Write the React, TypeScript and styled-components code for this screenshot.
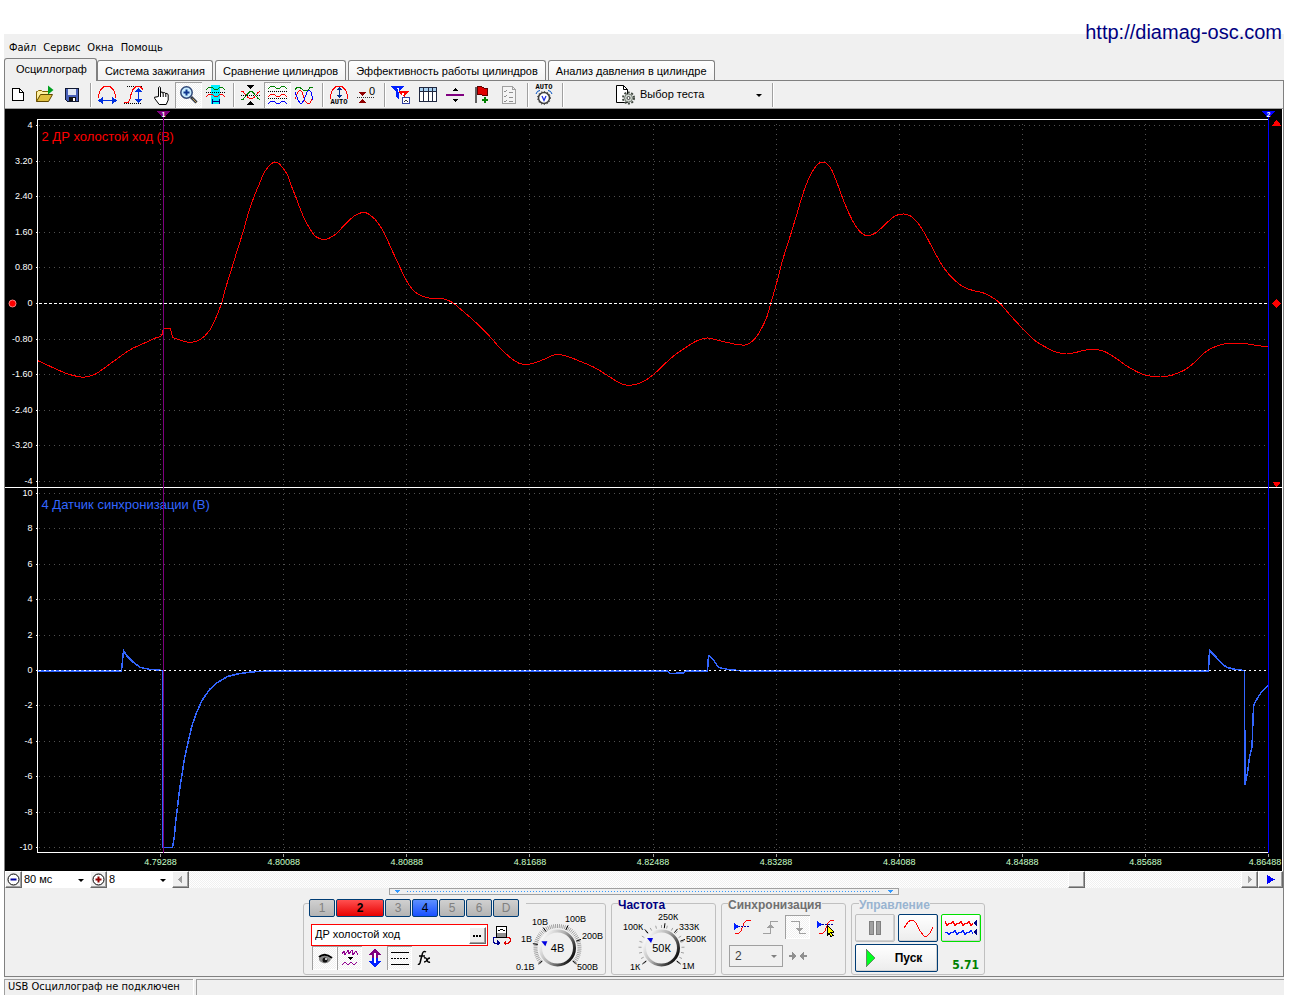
import React, { useLayoutEffect, useRef, useState } from 'react';
import styled, { createGlobalStyle, css } from 'styled-components';

const UI = `"Liberation Sans", Arial, sans-serif`;
const MENU = `"DejaVu Sans Condensed", Tahoma, "DejaVu Sans", sans-serif`;
const FACE = '#f0f0f0';
const dither = `repeating-conic-gradient(#fff 0 25%, ${FACE} 0 50%) 0 0 / 2px 2px`;

const Global = createGlobalStyle`
  *, *::before, *::after { box-sizing: border-box; }
  body { margin: 0; background: #fff; font: 11px/14px ${UI}; color: #000; }
  button, input, select { font: inherit; color: inherit; margin: 0; }
`;

/* ---------- shell ---------- */

const Page = styled.div`
  position: relative;
  display: flex;
  flex-direction: column;
  min-height: 100vh;
  padding: 34px 12px 5px 4px;
`;
const SiteLink = styled.a`
  position: absolute;
  top: 20px;
  right: 14px;
  font-size: 20px;
  line-height: 24px;
  color: #000080;
  text-decoration: none;
`;
const Window = styled.main`
  flex: 1;
  display: flex;
  flex-direction: column;
  background: ${FACE};
`;
const MenuBar = styled.nav`
  display: flex;
  height: 24px;
  padding: 4px 2px 0;
  font-family: ${MENU};
`;
const MenuItem = styled.button`
  border: 0;
  background: none;
  padding: 0 4px 0 3px;
`;
const Tabs = styled.div`
  display: flex;
  align-items: flex-end;
  height: 22px;
`;
const Tab = styled.button<{ $active?: boolean }>`
  height: 20px;
  margin-right: 2px;
  padding: 0 7px;
  border: 1px solid #808080;
  border-bottom: 0;
  border-radius: 3px 3px 0 0;
  background: linear-gradient(#fff, #f2f2f2);
  ${p => p.$active && css`
    position: relative;
    height: 23px;
    margin: 0 0 -1px;
    padding: 0 9px 2px 11px;
    background: ${FACE};
  `}
`;
const TabPage = styled.section`
  flex: 1;
  display: flex;
  flex-direction: column;
  border: 1px solid #808080;
`;
const StatusBar = styled.footer`
  display: flex;
  gap: 3px;
  height: 18px;
  padding-top: 2px;
  font-family: ${MENU};
`;
const StatusCell = styled.div<{ $grow?: boolean }>`
  ${p => (p.$grow ? 'flex: 1;' : 'width: 189px;')}
  padding-left: 3px;
  border: solid #a0a0a0;
  border-width: 1px 0 0 1px;
  box-shadow: 1px 0 #fff;
`;

/* ---------- toolbar ---------- */

const Toolbar = styled.div`
  display: flex;
  align-items: center;
  height: 28px;
  border-bottom: 1px solid #a0a0a0;
  box-shadow: 0 1px #fff;
`;
const ToolButton = styled.button<{ $on?: boolean }>`
  display: flex;
  align-items: center;
  justify-content: center;
  width: 27px;
  height: 26px;
  padding: 0 2px 0 0;
  border: 0;
  background: none;
  ${p => p.$on && css`
    background: ${dither};
    box-shadow: inset 1px 1px #a0a0a0, inset -1px -1px #fff;
  `}
`;
const Divider = styled.span`
  width: 2px;
  height: 24px;
  margin: 0 2px 0 4px;
  border-left: 1px solid #a0a0a0;
  border-right: 1px solid #fff;
`;
const TestPicker = styled.label`
  display: flex;
  align-items: center;
  gap: 2px;
  margin-left: 46px;
`;
const Arrowed = styled.div`
  position: relative;
  display: flex;
  &::after {
    content: '';
    position: absolute;
    right: 6px;
    top: calc(50% - 1px);
    border: 3px solid transparent;
    border-top-color: currentColor;
    border-bottom: 0;
    pointer-events: none;
  }
`;
const PlainSelect = styled.select<{ $w: number; $white?: boolean }>`
  appearance: none;
  width: ${p => p.$w}px;
  height: 17px;
  padding: 0 0 1px 2px;
  border: 0;
  border-radius: 0;
  background: ${p => (p.$white ? '#fff' : 'transparent')};
`;

type SvgProps = { children: React.ReactNode; w?: number; h?: number; smooth?: boolean };
const Glyph = ({ children, w = 24, h = 24, smooth }: SvgProps) => (
  <svg width={w} height={h} viewBox={`0 0 ${w} ${h}`} fill="none" shapeRendering={smooth ? 'auto' : 'crispEdges'} aria-hidden="true">
    {children}
  </svg>
);

const hump = (y: number) => `M3 ${y}l3-2h3l3 2h2l3-2h2l3 2`;

const icons: Record<string, React.ReactNode> = {
  new: <Glyph><path d="M6.500 5.500h7l4 4v8h-11z" fill="#fff" stroke="#000" /><path d="M13.500 5.500v4h4" stroke="#000" /></Glyph>,
  open: (
    <Glyph smooth>
      <path d="M3.500 18.500V8.500h1l1-1h3l1 1h6v3" fill="#fff0a0" stroke="#806000" />
      <path d="M3.500 18.500l4-7h12l-4 7z" fill="#e0c040" stroke="#604800" />
      <path d="M15 2.500l5.500 4.500L15 11.500z" fill="#00a020" />
    </Glyph>
  ),
  save: (
    <Glyph>
      <path d="M5.500 5.500h13v13H7.500l-2-2z" fill="#4860b8" stroke="#101830" />
      <path d="M8 6h8v6H8z" fill="#dfe6f4" />
      <path d="M9 14h7v4H9z" fill="#111" /><path d="M13 15h2v3h-2z" fill="#fff" />
    </Glyph>
  ),
  period: (
    <Glyph>
      <path d="M3.500 15v-3l2-5 3-3 3-1h1l3 1 3 3 2 5v3" stroke="red" />
      <path d="M6 17.500h13" stroke="#0030e0" />
      <path d="M8 14v7l-5-3.500zM17 14v7l5-3.500z" fill="#0030e0" />
    </Glyph>
  ),
  amplitude: (
    <Glyph>
      <path d="M5 3.500h16M2 20.500h17" stroke="#000" strokeDasharray="1 1" />
      <path d="M2 19.500h4l2-3 1-5 2-5 3-3h4l3 3" stroke="red" />
      <path d="M16.500 8v9" stroke="#0030e0" />
      <path d="M13 9l3.500-4L20 9zM13 16l3.500 4 3.500-4z" fill="#0030e0" />
    </Glyph>
  ),
  hand: (
    <Glyph smooth>
      <path d="M9.500 13.500V4.500q1-1.500 2 0v6q0-2 1.500-1.500t1 1.500q.2-1.500 1.500-1t1 1.500q.3-1 1.500-.5t1.200 1.500v5l-2 4.500h-7l-4.500-6q-.8-2 1.300-1.500z" fill="#fff" stroke="#000" />
      <path d="M11.500 10v4M14.200 10.500v3.500M16.800 11v3" stroke="#000" />
    </Glyph>
  ),
  zoom: (
    <Glyph smooth>
      <circle cx="10.500" cy="9.500" r="5.700" fill="#c8ecff" stroke="#304878" strokeWidth="1.500" />
      <path d="M7.500 9.500h6M10.500 6.500v6" stroke="#103890" strokeWidth="2" />
      <path d="M15 14l5.500 5.500" stroke="#303848" strokeWidth="3" /><path d="M16.500 15.500l4 4" stroke="#c8a050" />
    </Glyph>
  ),
  band: (
    <Glyph>
      <path d="M8 2h9v19H8z" fill="#00f0ff" />
      <path d={hump(6.500)} stroke="#008000" /><path d="M3 9.500h19" stroke="#000" strokeDasharray="1 1" />
      <path d={hump(13.500)} stroke="red" />
      <path d="M9 18.500h8" stroke="#000080" /><path d="M9 16v5M16.500 16v5" stroke="#000080" />
    </Glyph>
  ),
  cross: (
    <Glyph>
      <path d="M9 2h7l-3.500 4zM9 22h7l-3.500-4z" fill="#000" />
      <path d="M3 12.500h19" stroke="#000" strokeDasharray="1 1" />
      <path d="M3 8.500h2l5 6 2 1h2l2-1 4-5 2-1" stroke="red" /><path d="M3 16.500h2l5-6 2-2h2l2 2 4 5 2 1" stroke="#008000" />
    </Glyph>
  ),
  stack: (
    <Glyph>
      <path d={hump(5.500)} stroke="#008000" /><path d="M3 8.500h19M3 15.500h19" stroke="#000" strokeDasharray="1 1" />
      <path d={hump(13.500)} stroke="red" /><path d={hump(20.500)} stroke="#0000ff" />
    </Glyph>
  ),
  overlay: (
    <Glyph>
      <path d="M3 6.500l2-2h3l4 3h4l2-3h3" stroke="#008000" />
      <path d="M3 16l3-7 2-2 2 2 3 9 2 2h3l3-5" stroke="red" />
      <path d="M3 9l3 8 2 3h2l2-3 3-8 2-2 2 2 2 8" stroke="#0000ff" />
    </Glyph>
  ),
  auto: (
    <Glyph>
      <path d="M3.500 16v-4l2-5 3-3 3-1h1l3 1 3 3 2 5v4" stroke="red" />
      <path d="M12.500 5v9" stroke="#003090" /><path d="M10 7l2.500-3L15 7zM10 12l2.500 3 2.500-3z" fill="#003090" />
      <text x="12" y="21" fontSize="7" fontWeight="700" fontFamily="Liberation Mono, monospace" textAnchor="middle" fill="#000">AUTO</text>
    </Glyph>
  ),
  zero: (
    <Glyph>
      <path d="M3 14.500h18" stroke="#333" strokeDasharray="1 1" />
      <path d="M4 9h8l-4 4zM4 20h8l-4-4z" fill="#900000" />
      <text x="18" y="12" fontSize="11" fontFamily="Liberation Sans" textAnchor="middle" fill="#000">0</text>
    </Glyph>
  ),
  filters: (
    <Glyph>
      <path d="M2 3h13l-5 6v8l-3-3V9z" fill="#0020ff" /><path d="M9 8h11l-4 5v5l-3-3v-2z" fill="red" />
      <path d="M8 5h1v4" stroke="#fff" /><path d="M13 10h2l-2 3h2" stroke="#fff" />
      <path d="M13.500 14.500h7v6h-7z" fill="#fff" stroke="#3040a0" /><path d="M15 18h1l1-1 1 1h1" stroke="#333" />
    </Glyph>
  ),
  table: (
    <Glyph>
      <path d="M3.500 4.500h17v14h-17z" fill="#fff" stroke="#202840" /><path d="M4 5h16v3H4z" fill="#a8d0f0" />
      <path d="M3.500 8.500h17M7.500 5v13M12 5v13M16.500 5v13" stroke="#202840" />
    </Glyph>
  ),
  split: <Glyph><path d="M3 11h18v2H3z" fill="#800080" /><path d="M9 8l3-3 3 3zM9 16l3 3 3-3z" fill="#000" /></Glyph>,
  flag: (
    <Glyph>
      <path d="M6 4v16" stroke="#606060" strokeWidth="2" /><path d="M7 4l3-1 4 2h4l-1 4 1 3-4 1-4-2H7z" fill="#e00000" stroke="#600000" />
      <path d="M12 17h6M15 14v6" stroke="#008000" strokeWidth="2" />
    </Glyph>
  ),
  checklist: (
    <Glyph>
      <path d="M5.500 3.500h10l3 3v14h-13z" fill="#f4f4f4" stroke="#a0a0a0" /><path d="M15.500 3.500v3h3" stroke="#a0a0a0" />
      <path d="M7 8l1 1 2-2M7 13l1 1 2-2M7 18l1 1 2-2M12 9h4M12 14h4M12 18h4" stroke="#909090" />
    </Glyph>
  ),
  autoVolt: (
    <Glyph smooth>
      <text x="12" y="6" fontSize="7" fontWeight="700" fontFamily="Liberation Mono, monospace" textAnchor="middle" fill="#000">AUTO</text>
      <circle cx="12" cy="15" r="5.500" fill="#fff" stroke="#404040" strokeWidth="1.500" />
      <circle cx="12" cy="15" r="6.500" stroke="#303030" strokeDasharray="1 2" />
      <path d="M10 13l2 4.500 2-4.500" stroke="#2030e0" strokeWidth="1.300" />
      <path d="M4 11q1-3.500 4-3.500M20 11q-1-3.500-4-3.500" stroke="#0050c0" />
    </Glyph>
  ),
  test: (
    <Glyph smooth>
      <path d="M4.500 2.500h7l4 4v13h-11z" fill="#fff" stroke="#000" /><path d="M11.500 2.500v4h4" stroke="#000" />
      <circle cx="16.500" cy="15" r="5.500" stroke="#404840" strokeWidth="2" strokeDasharray="2 1.500" />
      <circle cx="16.500" cy="15" r="4" fill="#d0d8d0" stroke="#707870" /><circle cx="16.500" cy="15" r="1.500" fill="#fff" stroke="#404040" />
    </Glyph>
  ),
};

const toolGroups: [string, string, boolean?][][] = [
  [['new', 'Новый'], ['open', 'Открыть'], ['save', 'Сохранить']],
  [['period', 'Период'], ['amplitude', 'Амплитуда'], ['hand', 'Рука'], ['zoom', 'Лупа', true], ['band', 'Интервал']],
  [['cross', 'Совместить'], ['stack', 'Разделить', true], ['overlay', 'Наложить']],
  [['auto', 'Автомасштаб'], ['zero', 'Ноль']],
  [['filters', 'Фильтры'], ['table', 'Таблица'], ['split', 'Разделитель'], ['flag', 'Метка'], ['checklist', 'Список']],
  [['autoVolt', 'Авто']],
];

/* ---------- chart ---------- */

const RECORD = { left: 37, width: 1231 };
const traceA: number[] = [
  37, 360, 50, 366, 66, 373, 80, 376.500, 87, 376, 95, 373.500, 106, 366, 117, 358, 130, 349, 143, 343, 155, 337.500, 161, 336,
];
const bumpA: number[] = [161, 336, 163, 328, 170, 328, 172, 337];
const traceB: number[] = [
  172, 337, 181, 340, 190, 342, 200, 339, 209, 330, 215.500, 317, 221, 303, 225, 288, 231.500, 267, 237, 249, 243, 230, 248, 212, 254, 195,
  259, 183, 264, 171.500, 269, 165, 273, 162, 277, 162, 282, 167, 287, 174.500, 291.500, 187, 295.500, 197, 300, 209, 304.500, 219.500, 309.500, 228.500,
  314, 235, 319, 238, 324, 239, 329, 237.500, 336, 233, 343.500, 225, 349, 219.500, 354.500, 215, 360, 212.500, 366, 212.500, 371.500, 216, 376, 220.500,
  381.500, 228.500, 386.500, 238.500, 393, 253, 400, 268, 407, 282, 413, 290, 420, 295, 426, 297, 432, 298, 441, 298, 448, 300, 454, 303.500,
  464, 312, 477, 323.500, 487.500, 334, 500, 348, 511, 358, 518, 362.500, 525, 364, 532, 363, 543, 359, 552, 355, 559, 354, 570, 357, 580, 361,
  593, 366.500, 607, 375, 618, 382, 625, 384.500, 632, 384.500, 641, 382, 653, 374, 664, 363.500, 675, 354, 686, 346.500, 696, 340.500, 707, 337.500,
  714, 339, 727, 342, 736, 344, 744.500, 344.500, 749.500, 342.500, 755, 337.500, 761, 328, 766.500, 316, 770.500, 302, 776, 283, 782, 260, 790.500, 233,
  797, 211.500, 801, 198, 805.500, 184.500, 811.500, 171.500, 817.500, 163.500, 822.500, 161.500, 826, 163, 831, 169, 836, 181, 841.500, 196, 847, 209.500,
  852.500, 221, 858.500, 230, 864, 234.500, 869, 235, 875, 232.500, 882.500, 226, 891, 218, 897, 214.500, 903.500, 213.500, 910, 215.500, 917, 222,
  924.500, 233.500, 933, 249.500, 943, 267, 954, 279.500, 964, 287, 974.500, 290.500, 983, 292.500, 993.500, 298, 1000, 303.500, 1010, 315, 1023, 329,
  1033, 339, 1044, 346, 1054, 351, 1066, 353.500, 1077, 351.500, 1085.500, 349.500, 1096, 349, 1105, 351.500, 1115, 357.500, 1125.500, 365, 1136, 371,
  1146, 375, 1161, 376.500, 1172, 374.500, 1184, 369.500, 1194.500, 361.500, 1205, 351.500, 1215, 346, 1226, 343, 1242.500, 343, 1257, 345, 1268, 346.500,
];
const traceSync: number[] = [
  37, 670.500, 121, 670.500, 122, 660, 123, 650, 126, 655, 133, 662, 140, 667, 150, 669, 162, 670, 162.500, 847, 172, 847, 174, 835, 175, 822, 177, 807,
  178.500, 793, 181, 777, 184, 758, 187.500, 742, 191.500, 725, 196.500, 711, 201.500, 700, 209, 689, 217, 682, 227, 676, 237, 673.500, 250, 671.500,
  267, 670.500, 667, 670.500, 669, 673, 683, 672.500, 685, 670.500, 707, 670.500, 708, 655, 712, 658, 716, 664, 718, 667, 728, 669, 742, 670.500, 1208, 670.500,
  1209, 650, 1211, 652, 1216, 657, 1222, 664, 1227, 667, 1235, 669, 1244, 670, 1244.500, 784, 1247, 772, 1249, 757, 1251.500, 746, 1253, 706,
  1255, 701, 1260, 693, 1268, 684.500,
];

const times = ['4.79288', '4.80088', '4.80888', '4.81688', '4.82488', '4.83288', '4.84088', '4.84888', '4.85688', '4.86488'];
const voltsTop = ['4', '3.20', '2.40', '1.60', '0.80', '0', '-0.80', '-1.60', '-2.40', '-3.20', '-4'];
const voltsBottom = ['10', '8', '6', '4', '2', '0', '-2', '-4', '-6', '-8', '-10'];

const toPoints = (a: number[], fx: (n: number) => number, fy: (n: number) => number) => {
  const pts: [number, number][] = [];
  for (let i = 0; i < a.length; i += 2) pts.push([fx(a[i]), fy(a[i + 1])]);
  return pts;
};
const line = (p: [number, number][]) => 'M' + p.map(q => q.join(' ')).join('L');
const spline = (p: [number, number][]) => {
  let d = `M${p[0][0]} ${p[0][1]}`;
  for (let i = 0; i < p.length - 1; i++) {
    const a = p[Math.max(0, i - 1)], b = p[i], c = p[i + 1], e = p[Math.min(p.length - 1, i + 2)];
    d += `C${b[0] + (c[0] - a[0]) / 6} ${b[1] + (c[1] - a[1]) / 6} ${c[0] - (e[0] - b[0]) / 6} ${c[1] - (e[1] - b[1]) / 6} ${c[0]} ${c[1]}`;
  }
  return d;
};

const Screen = styled.div`
  flex: 1 1 0;
  min-height: 300px;
  margin-right: 1px;
  background: #000;
  overflow: hidden;
  box-shadow: 1px 0 #fff;
  svg { display: block; }
`;

function Scope() {
  const ref = useRef<HTMLDivElement>(null);
  const [{ w, h }, setSize] = useState({ w: 1277, h: 762 });
  useLayoutEffect(() => {
    const el = ref.current!;
    const measure = () => setSize({ w: el.clientWidth, h: el.clientHeight });
    measure();
    const ro = new ResizeObserver(measure);
    ro.observe(el);
    return () => ro.disconnect();
  }, []);

  const L = 32.5, R = w - 13.5, T = 10.5, B = h - 18.5;
  const M = Math.floor(T + (B - T) * 0.502) + 0.5;
  const snap = (n: number) => Math.floor(n) + 0.5;
  const fx = (x: number) => L + ((x - RECORD.left) / RECORD.width) * (R - L);
  const pane = (top: number, bottom: number, i: number) => snap(top + ((bottom - top) * i) / 10);
  const topY = (i: number) => pane(T + 6, M - 6, i);
  const botY = (i: number) => pane(M + 6, B - 5, i);
  const fyTop = (y: number) => T + 6 + ((y - 125) / 356) * (M - T - 12);
  const fyBot = (y: number) => M + 6 + ((y - 493) / 354) * (B - M - 11);
  const cursor = snap(fx(163));
  const left = Math.ceil(L);
  const timeX = (i: number) => L + ((R - L) * (i + 1)) / 10;

  return (
    <Screen ref={ref}>
      <svg width={w} height={h} shapeRendering="crispEdges" fontFamily="Liberation Sans, Arial, sans-serif" fill="none">
        <g stroke="#505050" strokeDasharray="1 4">
          {voltsTop.map((_, i) => <path key={i} d={`M${left + 1} ${topY(i)}H${R}`} />)}
          {voltsBottom.map((_, i) => <path key={i} d={`M${left + 1} ${botY(i)}H${R}`} />)}
          {times.slice(0, 9).map((_, i) => <path key={i} d={`M${snap(timeX(i))} ${Math.floor(T) + 5}V${B}`} />)}
        </g>
        <path d={spline(toPoints(traceA, fx, fyTop)) + line(toPoints(bumpA, fx, fyTop)) + spline(toPoints(traceB, fx, fyTop))} stroke="#f00" />
        <g stroke="#fff">
          <path d={`M${L} ${B}V${T}H${R}M0 ${M}H${w}M${L} ${B}H${R}`} />
          {voltsTop.map((_, i) => <path key={i} d={`M${L - 2} ${topY(i)}h2`} />)}
          {voltsBottom.map((_, i) => <path key={i} d={`M${L - 2} ${botY(i)}h2`} />)}
          <path d={`M${left + 1} ${topY(5)}H${R}`} strokeDasharray="3 2" />
        </g>
        <path d={line(toPoints(traceSync, fx, fyBot))} stroke="#3366ff" strokeWidth="1.500" />
        <path d={`M${left + 1} ${botY(5)}H${R}`} stroke="#fff" strokeDasharray="2 3" />
        <g stroke="#a0a0a0">{times.map((_, i) => <path key={i} d={`M${snap(timeX(i))} ${B + 1}v3`} />)}</g>

        <g fill="#fff" fontSize="9" textAnchor="end">
          {voltsTop.map((v, i) => <text key={i} x={L - 5} y={topY(i) + 2}>{v}</text>)}
          {voltsBottom.map((v, i) => <text key={i} x={L - 5} y={botY(i) + 2}>{v}</text>)}
        </g>
        <g fill="#c8ffc8" fontSize="9" textAnchor="middle">
          {times.map((t, i) => <text key={t} x={Math.min(timeX(i), w - 17)} y={B + 12}>{t}</text>)}
        </g>
        <text x={L + 4} y={T + 21} fontSize="13" fill="#f00">2 ДР холостой ход (В)</text>
        <text x={L + 4} y={M + 21} fontSize="13" fill="#3366ff">4 Датчик синхронизации (В)</text>

        <path d={`M${cursor} 8V${B}`} stroke="#800080" />
        <path d={`M${cursor - 7} 2h14l-7 7z`} fill="#800080" />
        <path d={`M${R} 8V${B}`} stroke="#00f" />
        <path d={`M${R - 7} 2h14l-7 7z`} fill="#00f" />
        <g fill="#fff" fontSize="7" fontWeight="700" textAnchor="middle">
          <text x={cursor} y="8">1</text>
          <text x={R} y="8">2</text>
        </g>
        <g fill="#f00">
          <path d={`M${w - 10} ${T + 6}h9l-4.500-6z`} />
          <path d={`M${w - 10} ${M - 6}h9l-4.500 6z`} />
          <path d={`M${w - 10} ${topY(5)}l4.500-4.500 4.500 4.500-4.500 4.500z`} />
          <circle cx="7.500" cy={topY(5)} r="3.500" stroke="#ff8080" shapeRendering="auto" />
        </g>
      </svg>
    </Screen>
  );
}

/* ---------- time base and scroll row ---------- */

const ScrollRow = styled.div`
  display: flex;
  height: 17px;
  background: #fff;
`;
const Raised = styled.button<{ $w?: number }>`
  display: flex;
  align-items: center;
  justify-content: center;
  flex: none;
  width: ${p => p.$w ?? 17}px;
  height: 17px;
  padding: 0;
  border: 1px solid;
  border-color: #fff #696969 #696969 #fff;
  background: ${FACE};
  box-shadow: inset -1px -1px #a0a0a0;
`;
const Track = styled.div`
  flex: 1;
  display: flex;
  background: ${dither};
`;
const Gap = styled.span<{ $grow: number }>`
  flex: ${p => p.$grow} 1 0;
`;

/* ---------- bottom panel ---------- */

const Splitter = styled.div`
  display: flex;
  align-items: center;
  justify-content: space-between;
  width: 510px;
  height: 7px;
  margin: 0 auto;
  padding: 0 4px;
  border: 1px solid #a0a0a0;
  color: #3399ff;
`;
const Dots = styled.span`
  flex: 1;
  height: 1px;
  margin: 0 6px;
  background: repeating-linear-gradient(90deg, #3399ff 0 1px, transparent 1px 3px);
`;
const Panel = styled.div`
  display: flex;
  justify-content: center;
  gap: 5px;
  padding: 4px 0 1px;
`;
const Group = styled.fieldset<{ $w: number; $pad?: number }>`
  width: ${p => p.$w}px;
  min-width: 0;
  height: 76px;
  margin: 0;
  padding: 0 0 0 ${p => p.$pad ?? 6}px;
  border: 1px solid #c0c0c0;
  border-radius: 3px;
`;
const Title = styled.legend<{ $color: string; $indent?: number }>`
  height: 8px;
  margin-left: ${p => p.$indent ?? 0}px;
  padding: 0;
  font: 700 12px/12px ${UI};
  color: ${p => p.$color};
`;
const Channels = styled.legend`
  display: flex;
  height: 8px;
  margin-left: -2px;
  padding: 0 6px 0 0;
`;
const Channel = styled.button<{ $tone?: 'red' | 'blue' }>`
  width: ${p => (p.$tone === 'red' ? 48 : 26)}px;
  height: 18px;
  margin-right: 1px;
  padding: 0;
  border: 1px solid #003c74;
  border-radius: 2px;
  background: linear-gradient(#d0d0d0, #b4b4b4);
  font-size: 12px;
  color: #808080;
  ${p => p.$tone && css`color: #000;`}
  ${p => p.$tone === 'red' && css`background: linear-gradient(#ff5050, #e80000); font-weight: 700;`}
  ${p => p.$tone === 'blue' && css`background: linear-gradient(#5c90ff, #1850ff);`}
`;
const Row = styled.div<{ $gap?: number; $top?: number; $left?: number; $align?: string }>`
  display: flex;
  align-items: ${p => p.$align ?? 'center'};
  gap: ${p => p.$gap ?? 0}px;
  padding: ${p => p.$top ?? 0}px 0 0 ${p => p.$left ?? 0}px;
`;
const Source = styled.div`
  display: flex;
  align-items: center;
  width: 177px;
  height: 22px;
  padding: 1px;
  border: 1px solid #f00;
  background: #fff;
`;
const SourceInput = styled.input`
  flex: 1;
  min-width: 0;
  padding: 0 2px 2px;
  border: 0;
  background: none;
`;
const Mode = styled(ToolButton)`
  width: 25px;
  height: 24px;
  padding: 0;
`;
const KnobBox = styled.div`
  position: relative;
  width: 92px;
  height: 62px;
`;
const KnobInput = styled.input`
  position: absolute;
  left: 24px;
  top: 18px;
  width: 40px;
  height: 40px;
  opacity: 0;
`;
const Muted = styled(Arrowed)`
  color: #808080;
`;
const SyncSelect = styled(PlainSelect)`
  height: 22px;
  padding-left: 5px;
  border: 1px solid #a0a0a0;
  font-size: 12px;
  color: #404040;
`;
const Control = styled.button<{ $w?: number; $edge?: string; $bg?: string }>`
  display: flex;
  align-items: center;
  justify-content: center;
  width: ${p => p.$w ?? 40}px;
  height: 28px;
  padding: 0;
  border: 1px solid ${p => p.$edge ?? '#003c74'};
  border-radius: 2px;
  background: ${p => p.$bg ?? 'linear-gradient(#fff, #ececec)'};
  box-shadow: inset -1px -1px #d0d0d0;
  font: 700 12px/14px ${UI};
`;
const StartLabel = styled.span`
  flex: 1;
  padding-right: 6px;
`;
const Reading = styled.output`
  flex: 1;
  align-self: flex-end;
  padding-right: 5px;
  text-align: right;
  font: 700 12px/14px "DejaVu Sans Condensed", Tahoma, sans-serif;
  color: #008000;
`;

type KnobProps = { id: string; label: string; value: string; marks: [number, number, string, number][]; dense?: boolean; pointer: number };
function Knob({ id, label, value, marks, dense, pointer }: KnobProps) {
  const cx = 43.5, cy = 37;
  const polar = (deg: number, r: number) => [cx + r * Math.cos((deg * Math.PI) / 180), cy + r * Math.sin((deg * Math.PI) / 180)];
  const tick = (deg: number, a: number, b: number) => `M${polar(deg, a).join(' ')}L${polar(deg, b).join(' ')}`;
  const count = dense ? 54 : 18;
  const minor = Array.from({ length: count + 1 }, (_, i) => 138 + (264 / count) * i);
  const [px, py] = polar(pointer, 14);
  return (
    <KnobBox>
      <svg width="92" height="62" viewBox="0 0 92 62" fontFamily="Liberation Sans, Arial, sans-serif" aria-hidden="true">
        <defs>
          <linearGradient id={id} x1="0" y1="0.2" x2="1" y2="0.8">
            <stop offset="0" stopColor="#fff" /><stop offset=".45" stopColor="#b0b0b0" /><stop offset="1" stopColor="#000" />
          </linearGradient>
        </defs>
        <path d={minor.map(d => tick(d, 20, dense ? 24 : 23)).join('')} stroke="#a0a0a0" fill="none" />
        <path d={marks.map(m => tick(m[3], 20, 25)).join('')} stroke="#000" fill="none" />
        <circle cx={cx} cy={cy} r="17" fill={FACE} stroke={`url(#${id})`} strokeWidth="3" />
        <path d={`M${px - 3} ${py - 2}h6l-2 5z`} fill="#0000e0" />
        <g fontSize="9">{marks.map(m => <text key={m[2]} x={m[0]} y={m[1]}>{m[2]}</text>)}</g>
        <text x={cx} y={cy + 4} fontSize="11" textAnchor="middle">{value}</text>
      </svg>
      <KnobInput type="range" min="0" max="5" aria-label={label} />
    </KnobBox>
  );
}

const Stepper = ({ plus }: { plus?: boolean }) => (
  <Glyph w={15} h={15} smooth>
    <circle cx="7.500" cy="7.500" r="5.500" fill="#fff" stroke="#000" />
    <path d={plus ? 'M4.500 7.500h6M7.500 4.500v6' : 'M4.500 7.500h6'} stroke={plus ? '#900000' : '#0000a0'} strokeWidth="2" />
  </Glyph>
);

export default function App() {
  return (
    <Page>
      <Global />
      <Window>
        <MenuBar>
          {['Файл', 'Сервис', 'Окна', 'Помощь'].map(m => <MenuItem key={m}>{m}</MenuItem>)}
        </MenuBar>
        <Tabs>
          {['Осциллограф', 'Система зажигания', 'Сравнение цилиндров', 'Эффективность работы цилиндров', 'Анализ давления в цилиндре'].map((t, i) => (
            <Tab key={t} $active={i === 0}>{t}</Tab>
          ))}
        </Tabs>
        <TabPage>
          <Toolbar>
            {toolGroups.map((g, i) => (
              <React.Fragment key={i}>
                {g.map(([k, name, on]) => <ToolButton key={k} $on={on} aria-label={name}>{icons[k]}</ToolButton>)}
                <Divider />
              </React.Fragment>
            ))}
            <TestPicker aria-label="Выбор теста">
              {icons.test}
              <Arrowed>
                <PlainSelect $w={130} defaultValue="t"><option value="t">Выбор теста</option></PlainSelect>
              </Arrowed>
            </TestPicker>
            <Divider />
          </Toolbar>
          <Scope />
          <ScrollRow>
            <Raised aria-label="Уменьшить"><Stepper /></Raised>
            <Arrowed>
              <PlainSelect $w={68} $white aria-label="Развертка"><option>80 мс</option></PlainSelect>
            </Arrowed>
            <Raised aria-label="Увеличить"><Stepper plus /></Raised>
            <Arrowed>
              <PlainSelect $w={65} $white aria-label="Масштаб"><option>8</option></PlainSelect>
            </Arrowed>
            <Raised aria-label="Назад"><Glyph w={9} h={9}><path d="M6 1v7L2 4.500z" fill="#a0a0a0" /></Glyph></Raised>
            <Track>
              <Gap $grow={879} />
              <Raised aria-label="Ползунок" />
              <Gap $grow={156} />
            </Track>
            <Raised aria-label="Вперед"><Glyph w={9} h={9}><path d="M3 1v7l4-3.500z" fill="#a0a0a0" /></Glyph></Raised>
            <Raised $w={25} aria-label="Воспроизвести"><Glyph w={10} h={9}><path d="M1 0v9l8-4.500z" fill="#00f" /></Glyph></Raised>
          </ScrollRow>
          <Splitter>
            <Glyph w={7} h={3}><path d="M0 0h7L3.500 3z" fill="#3399ff" /></Glyph>
            <Dots />
            <Glyph w={7} h={3}><path d="M0 0h7L3.500 3z" fill="#3399ff" /></Glyph>
          </Splitter>
          <Panel>
            <Group $w={303} $pad={7}>
              <Channels>
                <Channel>1</Channel><Channel $tone="red">2</Channel><Channel>3</Channel><Channel $tone="blue">4</Channel>
                <Channel>5</Channel><Channel>6</Channel><Channel>D</Channel>
              </Channels>
              <Row $align="flex-start" $gap={2}>
                <div>
                  <Row $gap={4} $top={17}>
                    <Source>
                      <SourceInput aria-label="Датчик" defaultValue="ДР холостой ход" />
                      <Raised aria-label="Выбрать"><Glyph w={9} h={9}><path d="M0 4h2v2H0zM3 4h2v2H3zM6 4h2v2H6z" fill="#000" /></Glyph></Raised>
                    </Source>
                    <Glyph w={20} h={20}>
                      <path d="M4.500 1.500h10v11h-10z" fill="#fff" stroke="#000" /><path d="M5 8h9v4H5z" fill="#909090" />
                      <path d="M6 5h2l1-1 2 1h2" stroke="#000" />
                      <path d="M4 12.500H2l-1 1v3l2 2h2" stroke="#000090" /><path d="M5 15v6l3-3z" fill="#000090" />
                      <path d="M15 12.500h2l1 1v3l-2 2h-2" stroke="#e00000" /><path d="M14 15v6l-3-3z" fill="#e00000" />
                    </Glyph>
                  </Row>
                  <Row $left={1}>
                    <Mode $on aria-label="Показать">
                      <Glyph w={20} h={20} smooth>
                        <path d="M4 10q6-5 12 1l-1 2q-3 3-7 2-3-1-4-3z" fill="#888" /><path d="M4 9q6-5 13 1" stroke="#000" strokeWidth="2" />
                        <circle cx="10" cy="12" r="2.500" fill="#111" /><circle cx="11" cy="11" r="1" fill="#fff" />
                      </Glyph>
                    </Mode>
                    <Mode $on aria-label="Сглаживание">
                      <Glyph w={20} h={20}>
                        <path d="M2 6l2-3 1 4 3-5 1 4 3-4 1 5 3-4 2 4M2 17l3-3 3 3 3-3 3 3 3-3" stroke="#900090" />
                        <path d="M7 9h7l-3.500 3z" fill="#000" />
                      </Glyph>
                    </Mode>
                    <Mode aria-label="Смещение">
                      <Glyph w={20} h={20}>
                        <path d="M10 1l7 6h-4v3H7V7H3z" fill="#800080" /><path d="M10 19l7-6h-4v-3H7v3H3z" fill="#0020ff" />
                        <path d="M10 5v10" stroke="#fff" strokeWidth="2" />
                      </Glyph>
                    </Mode>
                    <Mode $on aria-label="Линии">
                      <Glyph w={20} h={20}><path d="M1 4.500h18M1 16.500h18" stroke="#000" /><path d="M1 10.500h18" stroke="#000" strokeDasharray="2 1" /></Glyph>
                    </Mode>
                    <Mode aria-label="Функция">
                      <Glyph w={20} h={20} smooth>
                        <path d="M11 4q-3-2-4 3L5 15q-1 2-2 1M4 8h6" stroke="#000" strokeWidth="1.500" />
                        <path d="M9 10q2-1 3 2t3 2M15 10q-2 0-3 2t-3 2" stroke="#000" strokeWidth="1.500" />
                      </Glyph>
                    </Mode>
                  </Row>
                </div>
                <Row $top={4}>
                  <Knob id="kv" label="Предел напряжения" value="4В" dense pointer={200}
                    marks={[[2, 59, '0.1В', 140], [7, 31, '1В', 190], [18, 14, '10В', 235], [51, 11, '100В', 295], [68, 28, '200В', 340], [63, 59, '500В', 40]]} />
                </Row>
              </Row>
            </Group>
            <Group $w={105}>
              <Title $color="#000080">Частота</Title>
              <Row $top={4}>
                <Knob id="kf" label="Частота" value="50К" pointer={215}
                  marks={[[12, 59, '1К', 140], [5, 19, '100К', 228], [40, 9, '250К', 278], [61, 19, '333К', 310], [68, 31, '500К', 340], [64, 58, '1М', 40]]} />
              </Row>
            </Group>
            <Group $w={125}>
              <Title $color="#707070">Синхронизация</Title>
              <Row $top={8} $left={1} $gap={3}>
                <Mode aria-label="Уровень">
                  <Glyph w={20} h={20}><path d="M3 16l3 1 3-3 3-8 3-3h4" stroke="red" /><path d="M3 9.500h15" stroke="#0000a0" strokeDasharray="2 1" /><path d="M2 6v7l5-3.500z" fill="#0020ff" /></Glyph>
                </Mode>
                <Mode aria-label="Фронт">
                  <Glyph w={20} h={20}><path d="M3 16.500h7.500v-12H18" stroke="#a0a0a0" /><path d="M7 11h7l-3.500-4z" fill="#a0a0a0" /></Glyph>
                </Mode>
                <Mode $on aria-label="Спад">
                  <Glyph w={20} h={20}><path d="M3 4.500h8.500v12H18" stroke="#a0a0a0" /><path d="M8 11h7l-3.500 4z" fill="#a0a0a0" /></Glyph>
                </Mode>
                <Mode aria-label="Выбор уровня">
                  <Glyph w={20} h={20}><path d="M3 16l3 1 3-3 3-8 3-3h3" stroke="red" /><path d="M3 7.500h15" stroke="#0000a0" strokeDasharray="2 1" /><path d="M1 4v7l5-3.500z" fill="#0020ff" /><path d="M11 8l7 7-3 .500 2 3-2 1-2-3-2 2z" fill="#ff0" stroke="#000" /></Glyph>
                </Mode>
              </Row>
              <Row $top={6} $left={1} $gap={6}>
                <Muted>
                  <SyncSelect $w={54} aria-label="Канал синхронизации"><option>2</option></SyncSelect>
                </Muted>
                <Glyph w={18} h={12}><path d="M0 5h3V2l5 4-5 4V7H0zM18 5h-3V2l-5 4 5 4V7h3z" fill="#909090" /></Glyph>
              </Row>
            </Group>
            <Group $w={134} $pad={3}>
              <Title $color="#99b4d1" $indent={4}>Управление</Title>
              <Row $top={7} $gap={3}>
                <Control $edge="#c0c0c0" $bg={FACE} aria-label="Пауза"><Glyph w={14} h={16}><path d="M1.500 1.500h4v13h-4zM8.500 1.500h4v13h-4z" fill="#a0a0a0" stroke="#808080" /></Glyph></Control>
                <Control aria-label="Сигнал"><Glyph w={30} h={20}><path d="M1 10l4-6 3-2h2l3 3 4 8 4 5h3l3-3 3-6" stroke="red" /></Glyph></Control>
                <Control $edge="#00e000" aria-label="Каналы">
                  <Glyph w={34} h={20}>
                    <path d="M1 3l2 5 2-3 2 1 2-3 2 5 2-3 2 1 2-3 2 5 2-3 2 1 2-3 2 5 2-3" stroke="red" />
                    <path d="M1 14h2l2 3 2-3 2 1 2-3 2 5 2-3 2 1 2-3 2 5 2-3 2 1 2-3 2 4" stroke="#0020ff" />
                    <path d="M33 2v6l-4-3zM33 11v6l-4-3z" fill="#000080" />
                  </Glyph>
                </Control>
              </Row>
              <Row $top={2}>
                <Control $w={83}>
                  <Glyph w={30} h={24}><path d="M10 3v18l9-9z" fill="#00ff20" stroke="#609060" /></Glyph>
                  <StartLabel>Пуск</StartLabel>
                </Control>
                <Reading>5.71</Reading>
              </Row>
            </Group>
          </Panel>
        </TabPage>
        <StatusBar>
          <StatusCell>USB Осциллограф не подключен</StatusCell>
          <StatusCell $grow />
        </StatusBar>
      </Window>
      <SiteLink href="http://diamag-osc.com">http://diamag-osc.com</SiteLink>
    </Page>
  );
}
